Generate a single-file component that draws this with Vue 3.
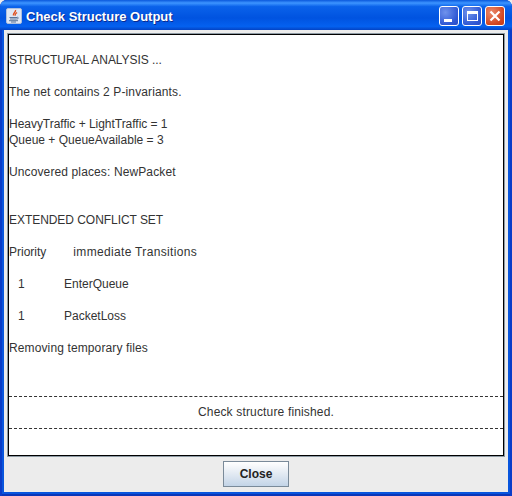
<script setup>
const lines = [
  { text: '' },
  { text: 'STRUCTURAL ANALYSIS ...', kind: 'caps' },
  { text: '' },
  { text: 'The net contains 2 P-invariants.', kind: 'wide' },
  { text: '' },
  { text: 'HeavyTraffic + LightTraffic = 1', kind: 'tight' },
  { text: 'Queue + QueueAvailable = 3' },
  { text: '' },
  { text: 'Uncovered places: NewPacket', kind: 'wide' },
  { text: '' },
  { text: '' },
  { text: 'EXTENDED CONFLICT SET', kind: 'caps' },
  { text: '' },
]
const after = ['', 'Removing temporary files', '', '']
</script>

<template>
  <div class="window">
    <div class="titlebar">
      <svg class="java" width="16" height="16" viewBox="0 0 16 16">
        <rect x="0.5" y="0.5" width="15" height="15" rx="1.500" fill="#dfe7f4" stroke="#aebfdc" />
        <path d="M9.500 2c.8 2-3 3-2 5.500M11 4.500c-1.300 1-2.300 1.500-1.800 3.200" fill="none" stroke="#e0501e" stroke-width="1.400" />
        <path d="M3.500 9.500h7.500M4 11h6.500c.8 0 1.800-.3 1.800-1s-.8-.8-1.300-.6" fill="none" stroke="#5a7498" />
        <path d="M3 12.700h9M5 14h5" stroke="#5a7498" />
      </svg>
      <span class="title">Check Structure Output</span>
      <div class="controls">
        <div class="ctl">
          <span class="min-glyph"></span>
        </div>
        <div class="ctl">
          <span class="max-glyph"></span>
        </div>
        <div class="ctl close-ctl">
          <svg width="12" height="12" viewBox="0 0 12 12">
            <path d="M1.500 1.500l9 9M10.500 1.500l-9 9" stroke="#fff" stroke-width="2.200" />
          </svg>
        </div>
      </div>
    </div>

    <div class="body">
      <div class="output">
        <div v-for="(l, i) in lines" :key="i" class="line" :class="l.kind">{{ l.text }}</div>
        <div class="line">Priority<span class="col-head">immediate Transitions</span></div>
        <div class="line"></div>
        <div class="line row"><span class="prio">1</span><span class="name">EnterQueue</span></div>
        <div class="line"></div>
        <div class="line row"><span class="prio">1</span><span class="name">PacketLoss</span></div>
        <div v-for="(l, i) in after" :key="'a' + i" class="line wide">{{ l }}</div>
        <div class="status">Check structure finished.</div>
      </div>
      <div class="footer">
        <button class="close-btn">Close</button>
      </div>
    </div>
  </div>
</template>

<style scoped>
.window {
  width: 512px;
  height: 496px;
  display: flex;
  flex-direction: column;
  box-sizing: border-box;
  background: #0855dd;
  box-shadow: inset 2px 0 0 #0a3cc8, inset -2px 0 0 #0a3cc8, inset 0 -2px 0 #0a36b8;
  border-radius: 7px 7px 0 0;
  overflow: hidden;
}

.titlebar {
  height: 30px;
  flex: none;
  display: flex;
  align-items: center;
  padding: 2px 7px 0 6px;
  box-sizing: border-box;
  background: linear-gradient(180deg, #0a58dc 0, #3d95ff 10%, #0a62ea 22%, #0053e0 60%, #0461f0 88%, #0343c4 100%);
}

.java {
  flex: none;
  margin-right: 4px;
}

.title {
  font-family: "Liberation Sans", Arial, sans-serif;
  font-weight: bold;
  font-size: 13px;
  color: #fff;
  text-shadow: 1px 1px 0 #0a2a90;
  white-space: nowrap;
}

.controls {
  margin-left: auto;
  display: flex;
  gap: 3px;
}

.ctl {
  width: 20px;
  height: 20px;
  box-sizing: border-box;
  border: 1px solid #fff;
  border-radius: 3px;
  background: radial-gradient(circle at 30% 30%, #6f92ec, #2f58d4 70%, #2a4cc4);
  position: relative;
  display: flex;
  align-items: center;
  justify-content: center;
}

.close-ctl {
  background: radial-gradient(circle at 30% 30%, #eb8a6c, #d2451f 70%, #c23a18);
}

.min-glyph {
  position: absolute;
  left: 4px;
  bottom: 3px;
  width: 8px;
  height: 3px;
  background: #fff;
}

.max-glyph {
  width: 11px;
  height: 10px;
  box-sizing: border-box;
  border: 1px solid #fff;
  border-top-width: 3px;
}

.body {
  flex: 1;
  min-height: 0;
  margin: 0 4px 4px;
  background: #ececec;
  display: flex;
  flex-direction: column;
  padding: 4px 4px 0;
  box-sizing: border-box;
}

.output {
  flex: 1;
  min-height: 0;
  background: #fff;
  border: 1px solid #000;
  box-shadow: 0 0 0 1px #8d9aa4;
  padding-top: 1px;
  overflow: hidden;
  font-family: "Liberation Sans", Arial, sans-serif;
  font-size: 12px;
  color: #333;
}

.line {
  height: 16px;
  line-height: 16px;
  white-space: pre;
}

.caps {
  letter-spacing: -0.05px;
}

.wide {
  letter-spacing: 0.12px;
}

.tight {
  letter-spacing: -0.03px;
}

.col-head {
  margin-left: 27px;
  letter-spacing: 0.33px;
}

.row {
  display: flex;
}

.prio {
  width: 55px;
  padding-left: 9px;
  box-sizing: border-box;
}

.status {
  margin-top: 8px;
  height: 33px;
  line-height: 31px;
  padding-left: 20px;
  text-align: center;
  letter-spacing: 0.16px;
  border-top: 1px dashed #333;
  border-bottom: 1px dashed #333;
  box-sizing: border-box;
}

.footer {
  height: 36px;
  flex: none;
  display: flex;
  align-items: center;
  justify-content: center;
}

.close-btn {
  width: 66px;
  height: 26px;
  padding: 0;
  border: 1px solid #7a8a99;
  background: linear-gradient(180deg, #fff 0, #eef2f7 30%, #c3d4e7 100%);
  font-family: "Liberation Sans", Arial, sans-serif;
  font-weight: bold;
  font-size: 12px;
  color: #222;
}
</style>

<style>
html, body {
  margin: 0;
  background: #ececec;
}
</style>
